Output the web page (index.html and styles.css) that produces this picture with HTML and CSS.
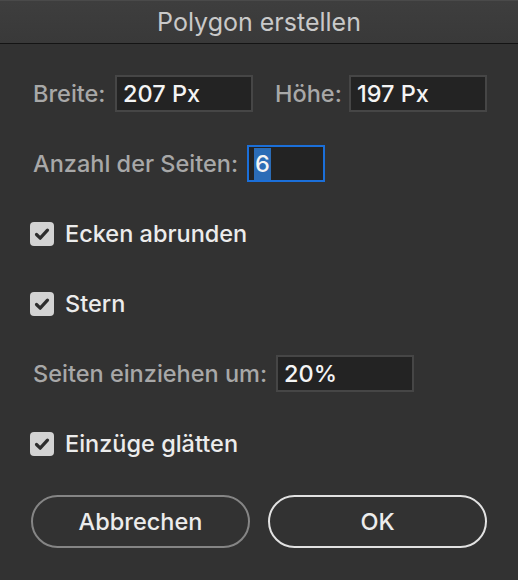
FILE: index.html
```html
<!DOCTYPE html>
<html lang="de">
<head>
    <meta charset="UTF-8">
    <meta name="viewport" content="width=device-width, initial-scale=1.0">
    <title>Polygon erstellen</title>
    <link rel="stylesheet" href="styles.css">
</head>
<body>
    <div class="dialog">
        <header class="titlebar">Polygon erstellen</header>
        <div class="content">
            <div class="row">
                <label class="label label-breite">Breite:</label>
                <div class="field field-wide">207 Px</div>
                <label class="label label-hoehe">Höhe:</label>
                <div class="field field-wide">197 Px</div>
            </div>
            <div class="row">
                <label class="label label-seiten">Anzahl der Seiten:</label>
                <div class="field field-small focused"><span class="selection">6</span></div>
            </div>
            <div class="row">
                <span class="checkbox">
                    <svg width="24" height="24" viewBox="0 0 24 24"><path d="M6.5 12.5 L10.2 16.2 L17.5 8.2" fill="none" stroke="#2e2e2e" stroke-width="3.2" stroke-linecap="round" stroke-linejoin="round"/></svg>
                </span>
                <span class="check-label">Ecken abrunden</span>
            </div>
            <div class="row">
                <span class="checkbox">
                    <svg width="24" height="24" viewBox="0 0 24 24"><path d="M6.5 12.5 L10.2 16.2 L17.5 8.2" fill="none" stroke="#2e2e2e" stroke-width="3.2" stroke-linecap="round" stroke-linejoin="round"/></svg>
                </span>
                <span class="check-label">Stern</span>
            </div>
            <div class="row">
                <label class="label label-einziehen">Seiten einziehen um:</label>
                <div class="field field-wide">20%</div>
            </div>
            <div class="row">
                <span class="checkbox">
                    <svg width="24" height="24" viewBox="0 0 24 24"><path d="M6.5 12.5 L10.2 16.2 L17.5 8.2" fill="none" stroke="#2e2e2e" stroke-width="3.2" stroke-linecap="round" stroke-linejoin="round"/></svg>
                </span>
                <span class="check-label">Einzüge glätten</span>
            </div>
            <div class="buttons">
                <button class="btn btn-cancel">Abbrechen</button>
                <button class="btn btn-ok">OK</button>
            </div>
        </div>
    </div>
</body>
</html>
```

FILE: styles.css
```css
body {
    margin: 0;
    background-color: #323232;
    font-family: Inter, "Liberation Sans", sans-serif;
    font-size: 23.5px;
    font-weight: 450;
}
.dialog {
    width: 518px;
    height: 580px;
    background-color: #323232;
}
.titlebar {
    height: 44px;
    line-height: 42px;
    text-align: center;
    color: #c9c9c9;
    font-size: 25px;
    font-weight: 400;
    background: linear-gradient(#3e3e3e, #393939);
    border-top: 1px solid #4a4a4a;
    border-bottom: 1px solid #141414;
    box-sizing: border-box;
}
.content {
    display: flex;
    flex-direction: column;
    gap: 33px;
    padding: 31px 31px 0 31px;
}
.row {
    display: flex;
    align-items: center;
    height: 37px;
}
.label {
    color: #a8a8a8;
    padding-left: 2px;
    box-sizing: border-box;
}
.label-breite {
    width: 84px;
}
.label-hoehe {
    width: 76px;
    margin-left: 20px;
}
.label-seiten {
    width: 216px;
}
.label-einziehen {
    width: 245px;
}
.field {
    height: 37px;
    box-sizing: border-box;
    background-color: #232323;
    border: 2px solid #464646;
    color: #f4f4f4;
    padding-left: 6px;
    display: flex;
    align-items: center;
}
.field-wide {
    width: 138px;
}
.field-small {
    width: 78px;
}
.focused {
    border-color: #1b6fd9;
    padding-left: 5px;
}
.selection {
    background-color: #2b6cb6;
    height: 32px;
    line-height: 32px;
    padding: 0 1px;
}
.checkbox {
    width: 24px;
    height: 24px;
    margin-left: -1px;
    background-color: #d3d3d3;
    border-radius: 4px;
    display: flex;
}
.check-label {
    color: #ececec;
    margin-left: 11px;
}
.buttons {
    display: flex;
    gap: 18px;
}
.btn {
    width: 219px;
    height: 53px;
    border-radius: 27px;
    background: transparent;
    font-family: Inter, "Liberation Sans", sans-serif;
    font-size: 23.5px;
    font-weight: 450;
    color: #ececec;
    cursor: pointer;
}
.btn-cancel {
    border: 2px solid #858585;
}
.btn-ok {
    border: 2px solid #e2e2e2;
}
```
